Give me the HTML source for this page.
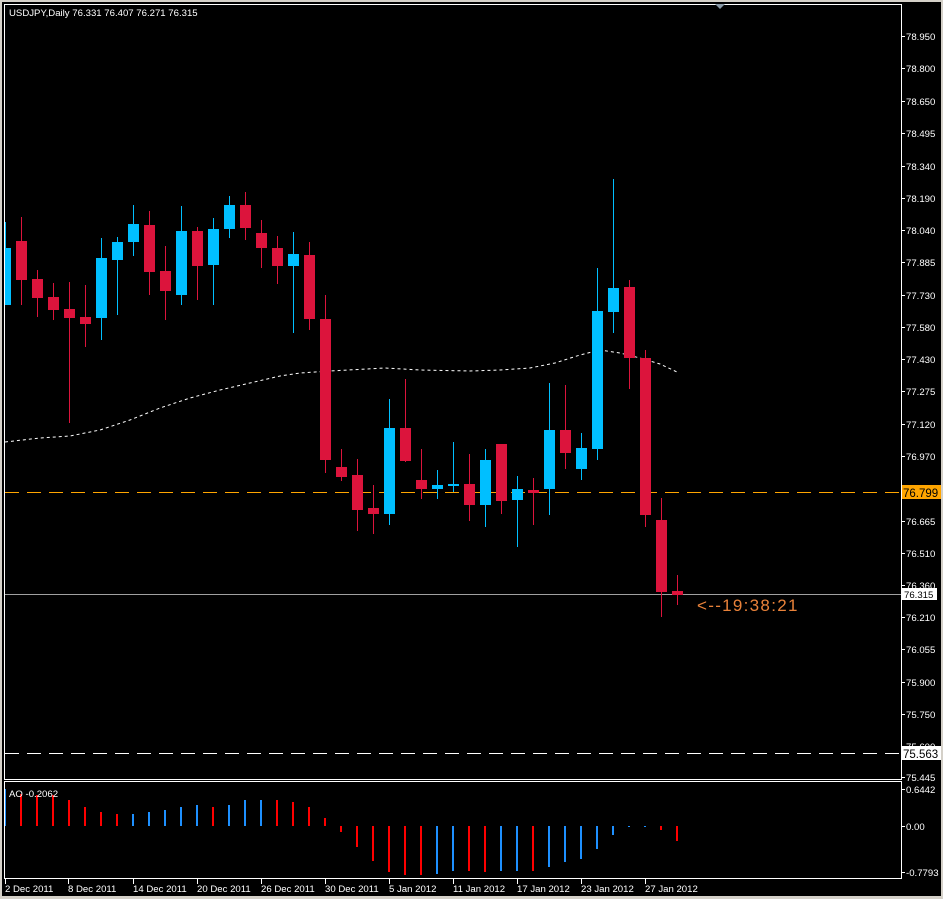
<!DOCTYPE html>
<html><head><meta charset="utf-8"><style>
html,body{margin:0;padding:0;background:#d4d0c8;width:943px;height:899px;overflow:hidden}
svg{position:absolute;left:0;top:0}
text{font-family:"Liberation Sans",sans-serif;font-size:9.6px;fill:#fff}
</style></head><body>
<svg width="943" height="899" viewBox="0 0 943 899">
<rect x="2" y="2" width="939" height="894" fill="#000"/>
<rect x="4.5" y="4.5" width="897" height="775" fill="none" stroke="#fff"/>
<rect x="4.5" y="781.5" width="897" height="97" fill="none" stroke="#fff"/>
<polygon points="715,4 725,4 720,9" fill="#8a9aa8"/>
<defs><clipPath id="c"><rect x="5" y="5" width="896" height="774"/></clipPath>
<clipPath id="c2"><rect x="5" y="782" width="896" height="96"/></clipPath></defs>
<text x="9" y="16">USDJPY,Daily  76.331 76.407 76.271 76.315</text>
<g clip-path="url(#c)">
<line x1="5" y1="492.5" x2="901" y2="492.5" stroke="#ffa500" stroke-dasharray="14,8"/>
<line x1="5" y1="594.5" x2="901" y2="594.5" stroke="#a0a0a0"/>
<line x1="5" y1="753.5" x2="901" y2="753.5" stroke="#fff" stroke-dasharray="14,8"/>
<polyline fill="none" stroke="#fff" stroke-dasharray="3,3" points="5,442 40,438 70,436 100,430 130,420 160,408 190,398 220,390 250,383 280,376 300,373 330,371 385,368 420,370 470,371 500,370 530,368 555,363 580,355 600,350 620,353 640,358 660,364 677,372"/>
<g fill="#00bfff">
<rect x="5" y="222" width="1" height="83"/><rect x="0" y="248" width="11" height="57"/>
<rect x="101" y="238" width="1" height="102"/><rect x="96" y="258" width="11" height="60"/>
<rect x="117" y="237" width="1" height="78"/><rect x="112" y="242" width="11" height="18"/>
<rect x="133" y="205" width="1" height="51"/><rect x="128" y="224" width="11" height="18"/>
<rect x="181" y="206" width="1" height="99"/><rect x="176" y="231" width="11" height="64"/>
<rect x="213" y="218" width="1" height="87"/><rect x="208" y="229" width="11" height="36"/>
<rect x="229" y="196" width="1" height="42"/><rect x="224" y="205" width="11" height="24"/>
<rect x="293" y="232" width="1" height="101"/><rect x="288" y="254" width="11" height="12"/>
<rect x="389" y="399" width="1" height="126"/><rect x="384" y="428" width="11" height="86"/>
<rect x="437" y="470" width="1" height="29"/><rect x="432" y="485" width="11" height="4"/>
<rect x="453" y="442" width="1" height="50"/><rect x="448" y="484" width="11" height="2"/>
<rect x="485" y="449" width="1" height="78"/><rect x="480" y="460" width="11" height="45"/>
<rect x="517" y="476" width="1" height="71"/><rect x="512" y="489" width="11" height="11"/>
<rect x="549" y="383" width="1" height="132"/><rect x="544" y="430" width="11" height="59"/>
<rect x="581" y="433" width="1" height="47"/><rect x="576" y="448" width="11" height="21"/>
<rect x="597" y="268" width="1" height="192"/><rect x="592" y="311" width="11" height="138"/>
<rect x="613" y="179" width="1" height="154"/><rect x="608" y="288" width="11" height="24"/>
</g>
<g fill="#dc143c">
<rect x="21" y="217" width="1" height="88"/><rect x="16" y="241" width="11" height="39"/>
<rect x="37" y="270" width="1" height="47"/><rect x="32" y="279" width="11" height="19"/>
<rect x="53" y="283" width="1" height="37"/><rect x="48" y="297" width="11" height="13"/>
<rect x="69" y="282" width="1" height="141"/><rect x="64" y="309" width="11" height="9"/>
<rect x="85" y="285" width="1" height="62"/><rect x="80" y="317" width="11" height="7"/>
<rect x="149" y="211" width="1" height="84"/><rect x="144" y="225" width="11" height="47"/>
<rect x="165" y="246" width="1" height="74"/><rect x="160" y="271" width="11" height="20"/>
<rect x="197" y="227" width="1" height="73"/><rect x="192" y="231" width="11" height="35"/>
<rect x="245" y="192" width="1" height="48"/><rect x="240" y="205" width="11" height="23"/>
<rect x="261" y="220" width="1" height="48"/><rect x="256" y="233" width="11" height="15"/>
<rect x="277" y="236" width="1" height="48"/><rect x="272" y="248" width="11" height="18"/>
<rect x="309" y="242" width="1" height="88"/><rect x="304" y="255" width="11" height="64"/>
<rect x="325" y="295" width="1" height="178"/><rect x="320" y="319" width="11" height="141"/>
<rect x="341" y="449" width="1" height="32"/><rect x="336" y="467" width="11" height="10"/>
<rect x="357" y="459" width="1" height="72"/><rect x="352" y="475" width="11" height="35"/>
<rect x="373" y="485" width="1" height="49"/><rect x="368" y="508" width="11" height="6"/>
<rect x="405" y="379" width="1" height="83"/><rect x="400" y="428" width="11" height="33"/>
<rect x="421" y="449" width="1" height="50"/><rect x="416" y="480" width="11" height="9"/>
<rect x="469" y="454" width="1" height="67"/><rect x="464" y="484" width="11" height="21"/>
<rect x="501" y="444" width="1" height="70"/><rect x="496" y="444" width="11" height="57"/>
<rect x="533" y="478" width="1" height="47"/><rect x="528" y="490" width="11" height="3"/>
<rect x="565" y="385" width="1" height="84"/><rect x="560" y="430" width="11" height="23"/>
<rect x="629" y="280" width="1" height="109"/><rect x="624" y="287" width="11" height="71"/>
<rect x="645" y="350" width="1" height="177"/><rect x="640" y="358" width="11" height="157"/>
<rect x="661" y="498" width="1" height="119"/><rect x="656" y="520" width="11" height="72"/>
<rect x="677" y="575" width="1" height="30"/><rect x="672" y="591" width="11" height="4"/>
</g>
</g>
<text x="697" y="611" style="font-size:17px;letter-spacing:1.3px;fill:#e9823a">&lt;--19:38:21</text>
<g stroke="#fff"><path d="M902 36.5h3M902 68.5h3M902 101.5h3M902 133.5h3M902 166.5h3M902 198.5h3M902 230.5h3M902 262.5h3M902 295.5h3M902 327.5h3M902 359.5h3M902 391.5h3M902 424.5h3M902 456.5h3M902 488.5h3M902 521.5h3M902 553.5h3M902 585.5h3M902 617.5h3M902 649.5h3M902 682.5h3M902 714.5h3M902 746.5h3M902 777.5h3M902 789.5h3M902 826.5h3M902 872.5h3"/></g>
<g>
<text x="906" y="40">78.950</text><text x="906" y="72">78.800</text><text x="906" y="105">78.650</text><text x="906" y="137">78.495</text><text x="906" y="170">78.340</text><text x="906" y="202">78.190</text><text x="906" y="234">78.040</text><text x="906" y="266">77.885</text><text x="906" y="299">77.730</text><text x="906" y="331">77.580</text><text x="906" y="363">77.430</text><text x="906" y="395">77.275</text><text x="906" y="428">77.120</text><text x="906" y="460">76.970</text><text x="906" y="492">76.820</text><text x="906" y="525">76.665</text><text x="906" y="557">76.510</text><text x="906" y="589">76.360</text><text x="906" y="621">76.210</text><text x="906" y="653">76.055</text><text x="906" y="686">75.900</text><text x="906" y="718">75.750</text><text x="906" y="750">75.600</text><text x="906" y="781">75.445</text>
<text x="906" y="793">0.6442</text><text x="906" y="830">0.00</text><text x="906" y="876">-0.7793</text>
</g>
<rect x="902" y="485" width="39" height="14" fill="#ffa500"/><text x="903" y="497" style="font-size:11.5px;fill:#000">76.799</text>
<rect x="902" y="588" width="35" height="12" fill="#fff"/><text x="904" y="598" style="fill:#000">76.315</text>
<rect x="902" y="746" width="39" height="14" fill="#fff"/><text x="903" y="758" style="font-size:11.5px;fill:#000">75.563</text>
<g clip-path="url(#c2)">
<g fill="#ff0000">
<rect x="20" y="794" width="2" height="32"/><rect x="36" y="795" width="2" height="31"/><rect x="52" y="795" width="2" height="31"/><rect x="68" y="800" width="2" height="26"/><rect x="84" y="807" width="2" height="19"/><rect x="100" y="812" width="2" height="14"/><rect x="116" y="814" width="2" height="12"/>
<rect x="212" y="807" width="2" height="19"/><rect x="276" y="800" width="2" height="26"/><rect x="292" y="802" width="2" height="24"/><rect x="308" y="807" width="2" height="19"/><rect x="324" y="818" width="2" height="8"/>
<rect x="340" y="826" width="2" height="6"/><rect x="356" y="826" width="2" height="21"/><rect x="372" y="826" width="2" height="35"/><rect x="388" y="826" width="2" height="46"/><rect x="404" y="826" width="2" height="49"/><rect x="420" y="826" width="2" height="49"/>
<rect x="468" y="826" width="2" height="45"/><rect x="484" y="826" width="2" height="46"/><rect x="532" y="826" width="2" height="45"/><rect x="660" y="826" width="2" height="4"/><rect x="676" y="826" width="2" height="15"/>
</g>
<g fill="#1e90ff">
<rect x="4" y="789" width="2" height="37"/>
<rect x="132" y="814" width="2" height="12"/><rect x="148" y="812" width="2" height="14"/><rect x="164" y="810" width="2" height="16"/><rect x="180" y="807" width="2" height="19"/><rect x="196" y="805" width="2" height="21"/>
<rect x="228" y="805" width="2" height="21"/><rect x="244" y="800" width="2" height="26"/><rect x="260" y="800" width="2" height="26"/>
<rect x="436" y="826" width="2" height="48"/><rect x="452" y="826" width="2" height="45"/><rect x="500" y="826" width="2" height="45"/><rect x="516" y="826" width="2" height="45"/><rect x="548" y="826" width="2" height="41"/><rect x="564" y="826" width="2" height="36"/><rect x="580" y="826" width="2" height="33"/><rect x="596" y="826" width="2" height="23"/><rect x="612" y="826" width="2" height="9"/><rect x="628" y="826" width="2" height="1"/><rect x="644" y="826" width="2" height="1"/>
</g>
</g>
<text x="9" y="797">AO -0.2062</text>
<g stroke="#fff"><path d="M5.5 879v5M68.5 879v5M133.5 879v5M197.5 879v5M261.5 879v5M325.5 879v5M389.5 879v5M453.5 879v5M517.5 879v5M581.5 879v5M645.5 879v5"/></g>
<g>
<text x="5" y="892">2 Dec 2011</text><text x="68" y="892">8 Dec 2011</text><text x="133" y="892">14 Dec 2011</text><text x="197" y="892">20 Dec 2011</text><text x="261" y="892">26 Dec 2011</text><text x="325" y="892">30 Dec 2011</text><text x="389" y="892">5 Jan 2012</text><text x="453" y="892">11 Jan 2012</text><text x="517" y="892">17 Jan 2012</text><text x="581" y="892">23 Jan 2012</text><text x="645" y="892">27 Jan 2012</text>
</g>
</svg>
</body></html>
